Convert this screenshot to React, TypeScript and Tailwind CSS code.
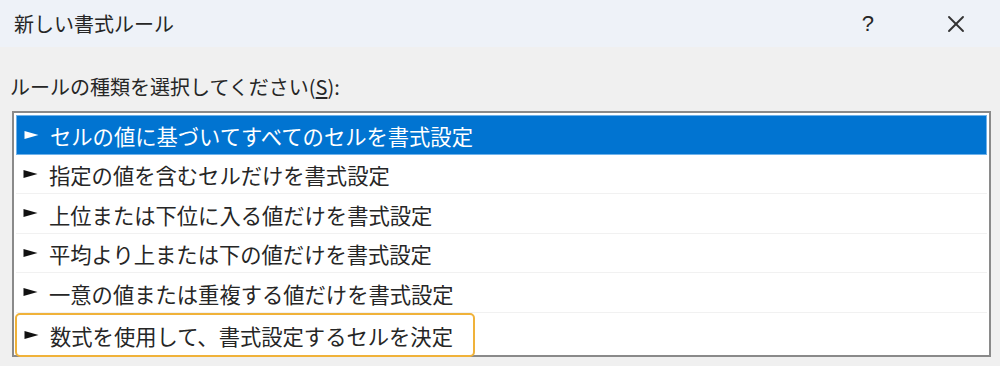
import { X } from "lucide-react";

const rules = [
  "セルの値に基づいてすべてのセルを書式設定",
  "指定の値を含むセルだけを書式設定",
  "上位または下位に入る値だけを書式設定",
  "平均より上または下の値だけを書式設定",
  "一意の値または重複する値だけを書式設定",
  "数式を使用して、書式設定するセルを決定",
];

const Arrow = ({ selected }: { selected: boolean }) => (
  <svg width="15" height="10" viewBox="0 0 15 10" className="shrink-0">
    <polygon points="0.5,1 14.5,5 0.5,9" fill={selected ? "#ffffff" : "#111111"} />
  </svg>
);

export default function App() {
  return (
    <div
      className="w-[1000px] h-[366px] bg-[#f0f0f0] overflow-hidden text-[#262626]"
      style={{ fontFamily: '"Noto Sans CJK JP", "Noto Sans", sans-serif' }}
    >
      {/* title bar */}
      <div className="h-[47px] bg-[#eef2f8] flex items-center pl-[14px]">
        <span className="text-[20px]">新しい書式ルール</span>
        <div className="ml-auto flex items-center">
          <span className="text-[22px] mr-[68px]" style={{ fontFamily: '"Liberation Sans", sans-serif' }}>?</span>
          <X className="w-[28px] h-[28px] mr-[30px] text-[#333]" strokeWidth={1.6} />
        </div>
      </div>

      <div className="pl-[10px] pr-[9px] pt-[27px]">
        <div className="text-[20px] leading-[26px]">
          ルールの種類を選択してください(<span className="underline underline-offset-2">S</span>):
        </div>

        <div className="mt-[11px] ml-[2px] h-[246px] border-2 border-[#8a8a8a] bg-white px-[2px] pt-[2px]">
          {rules.map((r, i) => {
            const selected = i === 0;
            const highlight = i === rules.length - 1;
            return (
              <div
                key={r}
                className={
                  "h-[39.5px] flex items-center pl-[7px] gap-[11px] " +
                  (selected
                    ? "bg-[#0174d1] text-white border border-[#6fb2ea]"
                    : highlight
                    ? "border-2 border-[#f0b23a] rounded-[5px] w-[460px] h-[44px] -ml-[1px] pl-[6px]"
                    : "border-b border-[#f1f1f1]")
                }
              >
                <Arrow selected={selected} />
                <span className="text-[21.3px] pt-[3px] whitespace-nowrap">{r}</span>
              </div>
            );
          })}
        </div>
      </div>
    </div>
  );
}
